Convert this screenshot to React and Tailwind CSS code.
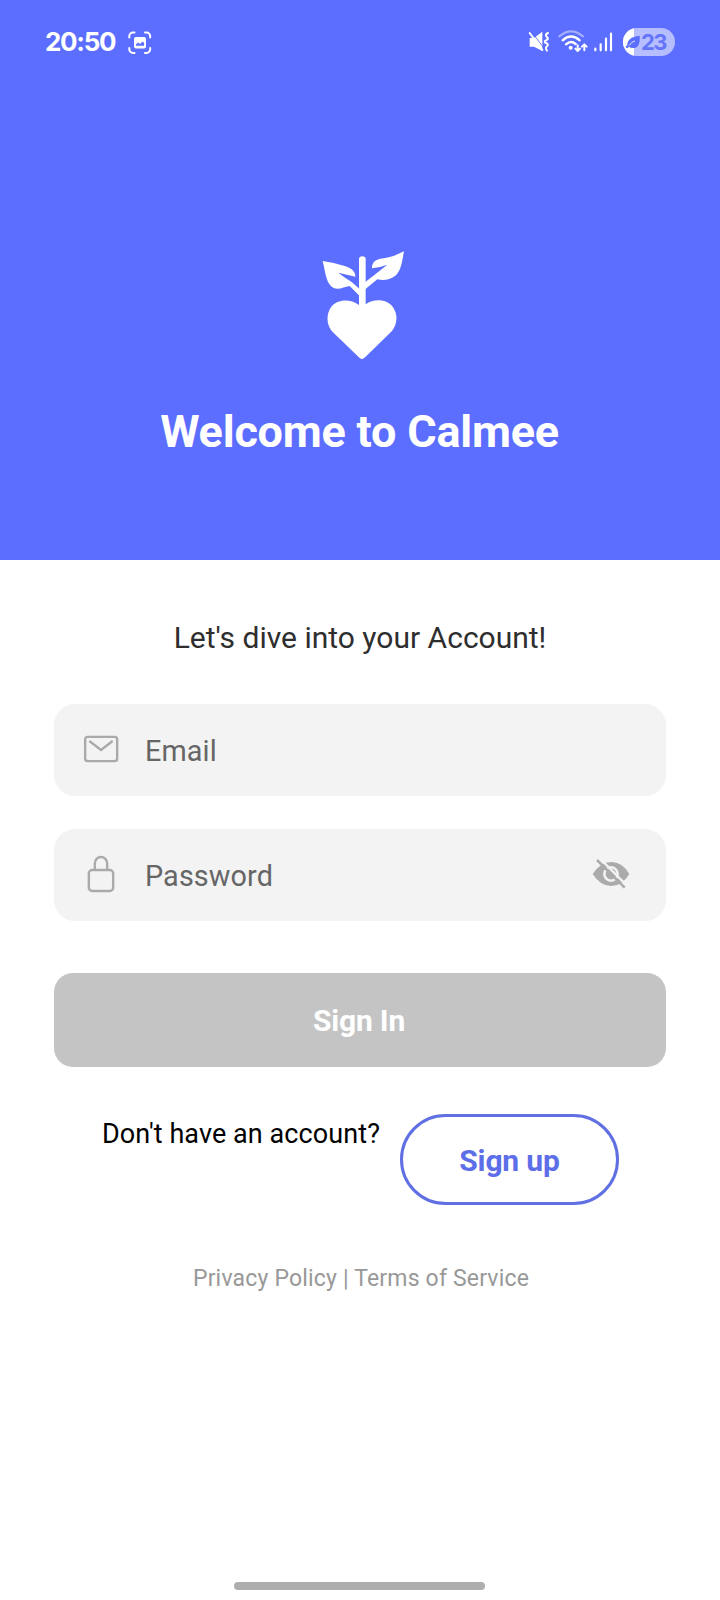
function ScreenshotIcon() {
  return (
    <svg className="mt-[30px] ml-[11px] h-[26px] w-[26px]" viewBox="0 0 26 26" fill="none">
      <path
        d="M2.300 7.500V6.200a3.700 3.700 0 0 1 3.700-3.700h1.500M18 2.500h1.500A3.700 3.700 0 0 1 23.200 6.200v1.300M23.200 18v1.300a3.700 3.700 0 0 1-3.700 3.700H18M7.500 23H6a3.700 3.700 0 0 1-3.700-3.700V18"
        stroke="white"
        strokeWidth="2"
        strokeLinecap="round"
      />
      <rect x="7" y="7" width="12" height="11.4" rx="2" fill="white" />
      <path d="M9 15.8v-1.6l2.3-1.7 1.7 1.4 2.6-2.4 1.5 1.6v2.7z" fill="#5c6eff" />
    </svg>
  );
}

function MuteIcon() {
  return (
    <svg className="h-[55px] w-[24px]" viewBox="36 0 72 165">
      <path d="M44 69h13l25-19v58L57 95H44z" fill="white" />
      <path d="M49 49l38 51" stroke="#5c6eff" strokeWidth="2.5" />
      <path d="M44 54l38 51" stroke="white" strokeWidth="6" strokeLinecap="round" />
      <path
        d="M99 54q-8 4-6 8t5 7-5 7 0 8 5 7-5 7 3 9"
        fill="none"
        stroke="white"
        strokeWidth="6"
        strokeLinecap="round"
      />
    </svg>
  );
}

function WifiIcon() {
  return (
    <svg className="ml-[6.3px] h-[55px] w-[32px]" viewBox="127 0 96 165" fill="none" strokeLinecap="round">
      <path d="M134 64Q169 34 205 64" stroke="#a3aeff" strokeWidth="6.5" />
      <path d="M144 76Q169 53 195 76" stroke="white" strokeWidth="7" />
      <path d="M154 88Q169 75 183 87" stroke="white" strokeWidth="7" />
      <circle cx="168" cy="98" r="6" fill="white" />
      <path d="M189 91v16M182 101l7 7 7-7M209 106V89M202 95l7-7 7 7" stroke="white" strokeWidth="6" strokeLinejoin="round" />
    </svg>
  );
}

function SignalIcon() {
  return (
    <svg className="ml-[4px] h-[55px] w-[20px]" viewBox="235 0 60 165" stroke="white" strokeWidth="6.500" strokeLinecap="round">
      <path d="M242 101v5M258 88v18M274 71v35M289 56v50" />
    </svg>
  );
}

function Battery() {
  return (
    <div className="mt-[28px] ml-[9.7px] flex h-[28px] w-[52px] overflow-hidden rounded-full bg-[#b6beff]">
      <div className="flex h-full w-[11px] bg-white">
        <svg className="h-[28px] w-[18px] shrink-0" viewBox="324 39 54 84">
          <path
            d="M337 90C337 75 347 65 374 62C376 86 369 100 354 99Q345 99 342 95Q337 102 333 98Q331 94 337 90z"
            fill="#5c6eff"
          />
          <path d="M342 92Q350 79 360 78" fill="none" stroke="#dfe3ff" strokeWidth="3" />
        </svg>
      </div>
      <span className="ml-[7px] font-['Inter'] text-[22px] leading-[29px] font-bold tracking-[-1.6px] text-[#6475fa]">23</span>
    </div>
  );
}

function StatusBar() {
  return (
    <div className="flex h-[85px] items-start text-white">
      <span className="ml-[45px] w-[71px] pt-[26px] font-['Inter'] text-[26px] leading-[31px] font-bold tracking-[-1.3px]">20:50</span>
      <ScreenshotIcon />
      <div className="mr-[45px] ml-auto flex">
        <div className="flex pt-[15px]">
          <MuteIcon />
          <WifiIcon />
          <SignalIcon />
        </div>
        <Battery />
      </div>
    </div>
  );
}

function Logo() {
  return (
    <svg className="mt-[155px] ml-[310px] h-[130px] w-[110px]" viewBox="0 0 330 390" fill="white">
      <path d="M156 358Q148 354 142 347L68 276C48 254 48 221 64 200C82 178 119 175 147 195V55Q149 49 157 49Q167 50 167 56V193C190 176 229 176 248 200C265 223 262 252 246 273L170 347Q162 355 156 358z" />
      <path d="M38 63Q74 68 104 78C123 83 137 95 136 110L117 106L85 98L103 112L126 127L152 150V171L119 138C103 140 87 151 71 144C49 132 48 106 38 63z" />
      <path d="M282 34C276 66 273 93 256 107C237 122 218 121 202 118L162 151V129L194 104L232 74L210 81L186 85C185 69 195 60 211 56C239 54 259 45 282 34z" />
    </svg>
  );
}

function Field({ icon, label, children }) {
  return (
    <div className="flex h-[92px] items-center rounded-[21px] bg-[#f3f3f3] pl-[25px]">
      {icon}
      <span className="ml-[22px] pt-[2px] text-[28.8px] leading-[34px] tracking-[0.1px] text-[#666]">{label}</span>
      {children}
    </div>
  );
}

function MailIcon() {
  return (
    <svg className="h-[92px] w-[44px]" viewBox="117 42 132 276" fill="none" stroke="#aaaaaa" strokeWidth="7.2">
      <rect x="135.500" y="140.500" width="96" height="73" rx="8" />
      <path d="M148 153l35 27 35-27" />
    </svg>
  );
}

function LockIcon() {
  return (
    <svg className="h-[92px] w-[44px]" viewBox="117 417 132 276" fill="none" stroke="#aaaaaa" strokeWidth="7.2">
      <rect x="146.5" y="540" width="73" height="63" rx="10" />
      <path d="M164.500 540v-20a18.500 19 0 0 1 37 0v20" />
    </svg>
  );
}

function EyeOffIcon() {
  return (
    <svg className="mr-[33px] ml-auto h-[92px] w-[44px]" viewBox="87 27 132 276" fill="none">
      <path d="M98 162Q121 126 154 126Q187 126 208 162Q187 198 154 198Q121 198 98 162z" fill="#ababab" />
      <circle cx="153" cy="162" r="20" stroke="#f3f3f3" strokeWidth="7.5" />
      <circle cx="153" cy="162" r="10" fill="#ababab" />
      <path d="M118 114L201 197" stroke="#f3f3f3" strokeWidth="7" />
      <path d="M111 120L194 203" stroke="#ababab" strokeWidth="7.5" />
    </svg>
  );
}

export default function App() {
  return (
    <div className="flex h-[1600px] w-[720px] flex-col bg-white font-['Roboto',sans-serif]">
      <header className="h-[560px] bg-[#5c6eff]">
        <StatusBar />
        <Logo />
        <h1 className="mt-[35px] pr-[1px] text-center text-[45px] leading-[54px] font-bold tracking-[-0.22px] whitespace-nowrap text-white">Welcome to Calmee</h1>
      </header>

      <main className="flex flex-col px-[54px]">
        <p className="mt-[60px] text-center text-[30px] leading-[36px] text-[#2e2e2e]">Let's dive into your Account!</p>
        <div className="mt-[48px] flex flex-col gap-[33px]">
          <Field icon={<MailIcon />} label="Email" />
          <Field icon={<LockIcon />} label="Password">
            <EyeOffIcon />
          </Field>
        </div>
        <button className="mt-[52px] h-[94px] rounded-[19px] bg-[#c4c4c4] pt-[2px] pr-[2px] text-[30px] leading-[36px] font-bold tracking-[-0.2px] text-white">Sign In</button>
        <div className="mt-[47px] flex pl-[48px]">
          <span className="w-[298px] pt-[4px] text-[27px] leading-[32px] tracking-[0.08px] whitespace-nowrap text-black">Don't have an account?</span>
          <button className="h-[91px] w-[219px] rounded-full border-3 border-[#6070e2] pt-[2px] text-[30px] font-bold tracking-[-0.15px] text-[#5c6ee8]">Sign up</button>
        </div>
        <p className="mt-[60px] pl-[2px] text-center text-[23px] leading-[28px] tracking-[0.18px] text-[#989898]">Privacy Policy | Terms of Service</p>
      </main>

      <div className="mt-auto mb-[10px] ml-[234px] h-[8px] w-[251px] rounded-full bg-[#aeaeae]" />
    </div>
  );
}
